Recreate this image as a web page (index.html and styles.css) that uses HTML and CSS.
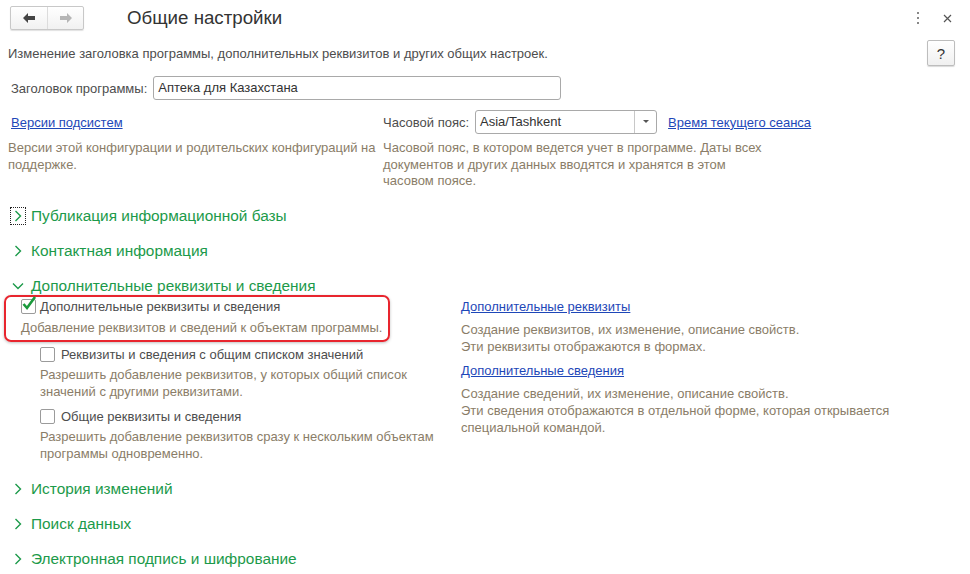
FILE: index.html
```html
<!DOCTYPE html>
<html lang="ru">
<head>
    <meta charset="UTF-8">
    <title>Общие настройки</title>
    <link rel="stylesheet" href="styles.css">
</head>
<body>
    <div class="form">
        <div class="header">
            <div class="nav">
                <button class="nav-button"><svg width="14" height="12" viewBox="0 0 14 12"><path d="M1 6 L6 1 L6 4 L13 4 L13 8 L6 8 L6 11 Z" fill="#444"/></svg></button>
                <button class="nav-button"><svg width="14" height="12" viewBox="0 0 14 12"><path d="M13 6 L8 1 L8 4 L1 4 L1 8 L8 8 L8 11 Z" fill="#b5b5b5"/></svg></button>
            </div>
            <h1 class="title">Общие настройки</h1>
            <div class="header-tools">
                <span class="kebab"><svg width="4" height="12" viewBox="0 0 4 12"><rect x="1" y="0" width="2" height="2" fill="#888"/><rect x="1" y="5" width="2" height="2" fill="#888"/><rect x="1" y="10" width="2" height="2" fill="#888"/></svg></span>
                <span class="close"><svg width="9" height="9" viewBox="0 0 9 9"><path d="M1 1 L8 8 M8 1 L1 8" stroke="#555" stroke-width="1.2"/></svg></span>
            </div>
        </div>

        <div class="intro">
            <span>Изменение заголовка программы, дополнительных реквизитов и других общих настроек.</span>
            <button class="help-button">?</button>
        </div>

        <div class="field-row">
            <label class="field-label">Заголовок программы:</label>
            <div class="input">Аптека для Казахстана</div>
        </div>

        <div class="two-cols">
            <div class="col-left">
                <div class="row-24"><a class="link" href="#">Версии подсистем</a></div>
                <div class="note">Версии этой конфигурации и родительских конфигураций на поддержке.</div>
            </div>
            <div class="col-right">
                <div class="row-24">
                    <label class="field-label">Часовой пояс:</label>
                    <div class="select">
                        <span class="select-value">Asia/Tashkent</span>
                        <span class="select-button"><svg width="6" height="4" viewBox="0 0 6 4"><path d="M0 0 L6 0 L3 3 Z" fill="#555"/></svg></span>
                    </div>
                    <a class="link tz-link" href="#">Время текущего сеанса</a>
                </div>
                <div class="note">Часовой пояс, в котором ведется учет в программе. Даты всех документов и других данных вводятся и хранятся в этом часовом поясе.</div>
            </div>
        </div>

        <div class="groups">
            <div class="group-header">
                <span class="chevron focused"><svg width="8" height="12" viewBox="0 0 8 12"><path d="M1.5 1 L6.5 6 L1.5 11" fill="none" stroke="#1c9a4a" stroke-width="1.4"/></svg></span>
                <span>Публикация информационной базы</span>
            </div>
            <div class="group-header">
                <span class="chevron"><svg width="8" height="12" viewBox="0 0 8 12"><path d="M1.5 1 L6.5 6 L1.5 11" fill="none" stroke="#1c9a4a" stroke-width="1.4"/></svg></span>
                <span>Контактная информация</span>
            </div>
            <div class="group-header">
                <span class="chevron"><svg width="12" height="8" viewBox="0 0 12 8"><path d="M1 1.5 L6 6.5 L11 1.5" fill="none" stroke="#1c9a4a" stroke-width="1.4"/></svg></span>
                <span>Дополнительные реквизиты и сведения</span>
            </div>

            <div class="group-body">
                <div class="options">
                    <div class="highlight">
                        <div class="check-row">
                            <span class="checkbox"><svg class="tick" width="16" height="16" viewBox="0 0 16 16"><path d="M2.5 8 L6 12 L14 1" fill="none" stroke="#1a9a3c" stroke-width="2.6"/></svg></span>
                            <span>Дополнительные реквизиты и сведения</span>
                        </div>
                        <div class="note">Добавление реквизитов и сведений к объектам программы.</div>
                    </div>
                    <div class="sub-option">
                        <div class="check-row">
                            <span class="checkbox"></span>
                            <span>Реквизиты и сведения с общим списком значений</span>
                        </div>
                        <div class="note">Разрешить добавление реквизитов, у которых общий список значений с другими реквизитами.</div>
                    </div>
                    <div class="sub-option">
                        <div class="check-row">
                            <span class="checkbox"></span>
                            <span>Общие реквизиты и сведения</span>
                        </div>
                        <div class="note">Разрешить добавление реквизитов сразу к нескольким объектам программы одновременно.</div>
                    </div>
                </div>
                <div class="links">
                    <div class="row-18"><a class="link" href="#">Дополнительные реквизиты</a></div>
                    <div class="note">Создание реквизитов, их изменение, описание свойств.<br>Эти реквизиты отображаются в формах.</div>
                    <div class="row-18 link-gap"><a class="link" href="#">Дополнительные сведения</a></div>
                    <div class="note">Создание сведений, их изменение, описание свойств.<br>Эти сведения отображаются в отдельной форме, которая открывается специальной командой.</div>
                </div>
            </div>

            <div class="group-header">
                <span class="chevron"><svg width="8" height="12" viewBox="0 0 8 12"><path d="M1.5 1 L6.5 6 L1.5 11" fill="none" stroke="#1c9a4a" stroke-width="1.4"/></svg></span>
                <span>История изменений</span>
            </div>
            <div class="group-header">
                <span class="chevron"><svg width="8" height="12" viewBox="0 0 8 12"><path d="M1.5 1 L6.5 6 L1.5 11" fill="none" stroke="#1c9a4a" stroke-width="1.4"/></svg></span>
                <span>Поиск данных</span>
            </div>
            <div class="group-header">
                <span class="chevron"><svg width="8" height="12" viewBox="0 0 8 12"><path d="M1.5 1 L6.5 6 L1.5 11" fill="none" stroke="#1c9a4a" stroke-width="1.4"/></svg></span>
                <span>Электронная подпись и шифрование</span>
            </div>
        </div>
    </div>
</body>
</html>
```

FILE: styles.css
```css
body {
    margin: 0;
    background-color: #fff;
    font-family: 'Liberation Sans', Arial, sans-serif;
    font-size: 13px;
    color: #4d4d4d;
}
.form {
    padding: 6px 15px 0 8px;
}
.header {
    display: flex;
    align-items: center;
    height: 24px;
}
.nav {
    display: flex;
    margin-left: 2px;
    border: 1px solid #c8c8c8;
    border-radius: 2px;
    box-shadow: 0 1px 1px rgba(0, 0, 0, 0.12);
    background: linear-gradient(#fff, #f1f1f1);
}
.nav-button {
    width: 36px;
    height: 22px;
    padding: 0;
    border: none;
    background: transparent;
    display: flex;
    align-items: center;
    justify-content: center;
}
.nav-button + .nav-button {
    border-left: 1px solid #dcdcdc;
}
.title {
    margin: 0 0 0 43px;
    font-size: 18.7px;
    font-weight: normal;
    color: #333;
}
.header-tools {
    margin-left: auto;
    display: flex;
    align-items: center;
}
.kebab {
    display: flex;
    margin-right: 23px;
}
.close {
    display: flex;
    margin-right: 3px;
}
.intro {
    display: flex;
    align-items: center;
    justify-content: space-between;
    margin-top: 10px;
    height: 26px;
}
.help-button {
    width: 28px;
    height: 26px;
    padding: 0;
    border: 1px solid #bdbdbd;
    border-radius: 2px;
    background: linear-gradient(#fff, #f0f0f0);
    box-shadow: 0 1px 1px rgba(0, 0, 0, 0.15);
    font-family: 'Liberation Sans', Arial, sans-serif;
    font-size: 15px;
    color: #333;
}
.field-row {
    display: flex;
    align-items: center;
    margin-top: 10px;
    height: 24px;
    padding-left: 3px;
}
.field-label {
    margin-right: 6px;
}
.input {
    width: 402px;
    height: 22px;
    line-height: 22px;
    padding-left: 4px;
    border: 1px solid #a9a9a9;
    border-radius: 3px;
    color: #333;
}
.two-cols {
    display: flex;
    margin-top: 10px;
}
.col-left {
    width: 375px;
}
.col-right {
    flex: 1;
}
.row-24 {
    display: flex;
    align-items: center;
    height: 24px;
}
.col-left .row-24 {
    padding-left: 3px;
}
.link {
    color: #1e47b8;
    text-decoration: underline;
}
.note {
    margin-top: 6px;
    line-height: 16.5px;
    color: #8a7d68;
}
.col-left .note {
    width: 370px;
}
.col-right .note {
    width: 388px;
}
.select {
    display: flex;
    width: 180px;
    height: 22px;
    border: 1px solid #a9a9a9;
    border-radius: 3px;
}
.select-value {
    flex: 1;
    line-height: 22px;
    padding-left: 4px;
    color: #333;
}
.select-button {
    width: 21px;
    border-left: 1px solid #c8c8c8;
    display: flex;
    align-items: center;
    justify-content: center;
}
.tz-link {
    margin-left: 11px;
}
.groups {
    margin-top: 14px;
}
.group-header {
    display: flex;
    align-items: center;
    height: 24px;
    margin-bottom: 11px;
    font-size: 15.4px;
    color: #1c9a4a;
}
.chevron {
    width: 16px;
    height: 18px;
    margin: 0 5px 0 2px;
    display: flex;
    align-items: center;
    justify-content: center;
    box-sizing: border-box;
    border: 1px dotted transparent;
}
.chevron.focused {
    border-color: #222;
}
.group-body {
    display: flex;
    margin-top: -14px;
    margin-bottom: 15px;
}
.options {
    width: 449px;
}
.highlight {
    margin-left: -4px;
    width: 367px;
    padding: 1px 0 4px 15px;
    border: 2px solid #e8252e;
    border-radius: 7px;
    box-shadow: 0 1px 3px rgba(0, 0, 0, 0.25);
}
.highlight .checkbox {
    margin-right: 4px;
}
.highlight .note {
    margin-top: 4px;
}
.check-row {
    display: flex;
    align-items: center;
    height: 18px;
    color: #4d4d4d;
}
.checkbox {
    position: relative;
    width: 13px;
    height: 13px;
    margin-right: 6px;
    border: 1px solid #9b9b9b;
    border-radius: 2px;
    background: #fff;
}
.tick {
    position: absolute;
    left: -1px;
    top: -4px;
}
.sub-option {
    padding-left: 32px;
    margin-top: 3px;
}
.sub-option + .sub-option {
    margin-top: 7px;
}
.sub-option .note {
    margin-top: 4px;
    width: 400px;
}
.links {
    padding-left: 4px;
    padding-top: 3px;
}
.row-18 {
    height: 18px;
    display: flex;
    align-items: center;
}
.links .note {
    margin-top: 5px;
    line-height: 17px;
    width: 440px;
}
.link-gap {
    margin-top: 7px;
}
```
